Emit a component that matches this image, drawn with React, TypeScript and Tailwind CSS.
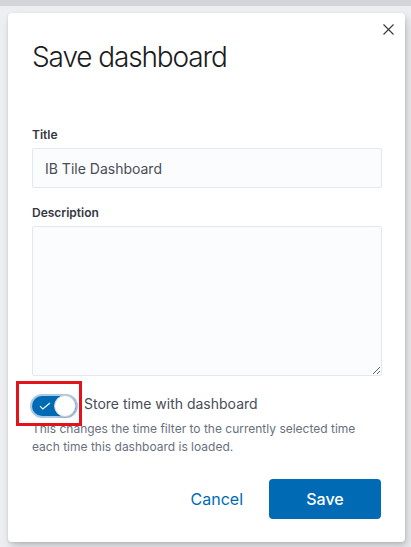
import { useState } from "react";

function ToggleSwitch({ checked, onChange }: { checked: boolean; onChange: (v: boolean) => void }) {
  return (
    <button
      type="button"
      role="switch"
      aria-checked={checked}
      onClick={() => onChange(!checked)}
      className="relative mt-[1px] h-[22px] w-[44px] shrink-0"
    >
      <span
        className={`absolute left-0 top-[1px] h-5 w-11 rounded-full ring-2 ring-[#a9c9e4] ${
          checked ? "bg-[#006bb4]" : "bg-[#98a2b3]"
        }`}
      />
      <svg
        className="absolute left-[7px] top-[7px]"
        width="12"
        height="8"
        viewBox="0 0 12 8"
        fill="none"
      >
        <path d="M1 4.2 3.8 7 11 1" stroke="#fff" strokeWidth="1.1" />
      </svg>
      <span
        className={`absolute top-0 h-[22px] w-[22px] rounded-full border border-[#c9ced6] bg-white shadow-[0_1px_2px_rgba(0,0,0,0.15)] ${
          checked ? "left-[22px]" : "left-0"
        }`}
      />
    </button>
  );
}

export default function App() {
  const [title, setTitle] = useState("IB Tile Dashboard");
  const [description, setDescription] = useState("");
  const [storeTime, setStoreTime] = useState(true);

  return (
    <div
      className="relative h-[547px] w-[411px] overflow-hidden bg-[#eceef1]"
      style={{ fontFamily: "Inter, 'Noto Sans', sans-serif" }}
    >
      <div className="h-[6px] bg-[#d3d5d9]" />

      <div className="relative ml-2 mt-[7px] h-[529px] w-[397px] rounded-[4px] bg-white px-6 pt-[26px] shadow-[0_1px_3px_rgba(0,0,0,0.12),3px_6px_10px_rgba(0,0,0,0.16)]">
        <button type="button" className="absolute right-[11px] top-[11px] h-[11px] w-[11px]" aria-label="Close">
          <svg width="11" height="11" viewBox="0 0 11 11" fill="none">
            <path d="M0.5 0.5 10.5 10.5M10.5 0.5 0.5 10.5" stroke="#343741" strokeWidth="1.1" />
          </svg>
        </button>

        <h2 className="text-[28px] font-light leading-9 tracking-[-0.04em] text-[#1a1c21]">Save dashboard</h2>

        <div className="mt-[51px]">
          <label className="block text-xs font-semibold leading-[18px] text-[#343741]">Title</label>
          <input
            value={title}
            onChange={(e) => setTitle(e.target.value)}
            className="mt-1 block h-10 w-[350px] rounded-[2px] border border-[#e3e7ee] bg-[#fbfcfd] px-3 text-sm text-[#484d58] outline-none"
          />
        </div>

        <div className="mt-4">
          <label className="block text-xs font-semibold leading-[18px] text-[#343741]">Description</label>
          <textarea
            value={description}
            onChange={(e) => setDescription(e.target.value)}
            className="mt-1 block h-[150px] w-[350px] rounded-[2px] border border-[#e3e7ee] bg-[#fbfcfd] px-3 py-2 text-sm text-[#343741] outline-none"
          />
        </div>

        <div className="mt-[18px] flex items-start gap-2">
          <ToggleSwitch checked={storeTime} onChange={setStoreTime} />
          <span className="text-sm leading-5 text-[#484d58]">Store time with dashboard</span>
        </div>
        <p className="mt-[3px] text-xs leading-[18px] text-[#69707d]">
          This changes the time filter to the currently selected time
          <br />
          each time this dashboard is loaded.
        </p>

        <div className="mt-[23px] flex items-center justify-end gap-[14px]">
          <button type="button" className="h-10 px-3 text-base text-[#006bb4]">
            Cancel
          </button>
          <button
            type="button"
            className="h-10 w-[112px] rounded-[4px] bg-[#006bb4] text-base font-medium text-white"
          >
            Save
          </button>
        </div>
      </div>

      <div className="pointer-events-none absolute left-4 top-[381px] h-[45px] w-[66px] border-[3px] border-[#e3131b]" />
    </div>
  );
}
